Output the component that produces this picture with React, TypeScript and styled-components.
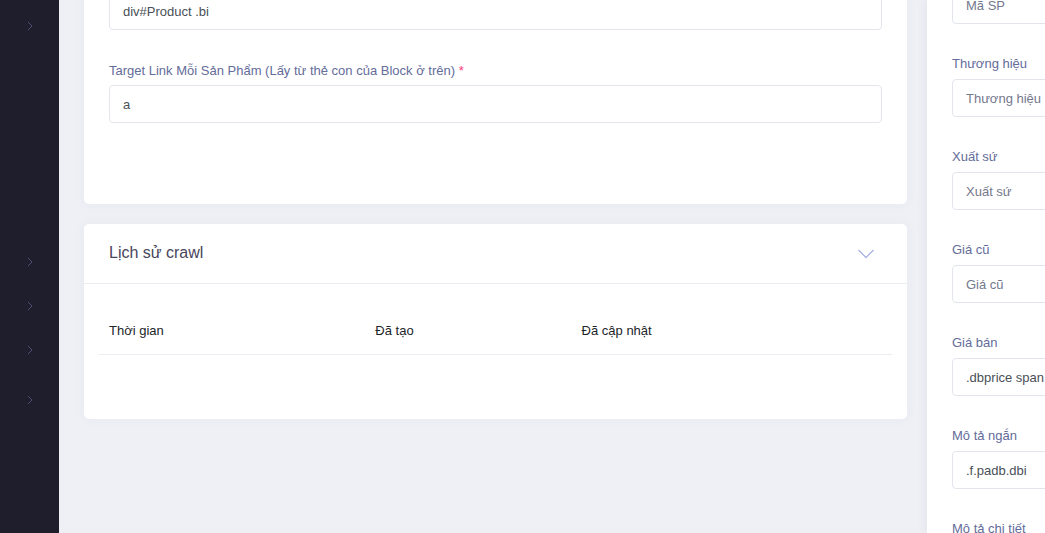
import React from "react";
import styled, { createGlobalStyle } from "styled-components";

const Global = createGlobalStyle`
  html, body { margin: 0; padding: 0; height: 100%; overflow: hidden; }
  body { font-family: "Liberation Sans", Arial, sans-serif; background: #eff0f6; }
  #root { height: 100%; }
`;

const Layout = styled.div`
  display: flex;
  height: 533px;
  width: 1045px;
  overflow: hidden;
`;

const Sidebar = styled.nav`
  flex: 0 0 59px;
  background: #1e1e2d;
  display: flex;
  flex-direction: column;
  padding-top: 4px;
`;

const SideItem = styled.div`
  height: 44px;
  display: flex;
  align-items: center;
  justify-content: center;
  color: #4b4d70;
`;

const SideSpacer = styled.div<{ $h: number }>`
  flex: 0 0 ${(p) => p.$h}px;
`;

const Main = styled.main`
  flex: 0 0 868px;
  padding: 0 20px 0 25px;
  box-sizing: border-box;
  overflow: hidden;
`;

const Scroll = styled.div<{ $offset: number }>`
  margin-top: ${(p) => -p.$offset}px;
  display: flex;
  flex-direction: column;
  gap: 20px;
`;

const Card = styled.section`
  background: #fff;
  border-radius: 5px;
  box-shadow: 0 0 13px 0 rgba(82, 63, 105, 0.04);
`;

const CardBody = styled.div<{ $pad: string }>`
  padding: ${(p) => p.$pad};
`;

const FormGroup = styled.div`
  margin-bottom: 31px;
`;

const Label = styled.label`
  display: block;
  font-size: 13px;
  line-height: 19px;
  color: #646c9a;
  margin-bottom: 5px;
`;

const Req = styled.span`
  color: #fd397a;
`;

const Input = styled.input`
  display: block;
  box-sizing: border-box;
  width: 100%;
  height: 38px;
  border: 1px solid #e2e5ec;
  border-radius: 4px;
  padding: 0 13px;
  font-family: "Liberation Sans", Arial, sans-serif;
  font-size: 13px;
  color: #495057;
  background: #fff;
  outline: none;
  &::placeholder {
    color: #74788d;
  }
`;

const CardHead = styled.header`
  height: 59px;
  border-bottom: 1px solid #ebedf3;
  display: flex;
  align-items: center;
  justify-content: space-between;
  padding: 0 33px 0 25px;
`;

const CardTitle = styled.h3`
  margin: 0 0 1px;
  font-size: 16px;
  font-weight: 400;
  color: #48465b;
`;

const Table = styled.table`
  width: 100%;
  border-collapse: collapse;
  table-layout: fixed;
`;

const Th = styled.th<{ $w: number }>`
  width: ${(p) => p.$w}px;
  text-align: left;
  font-weight: 400;
  font-size: 13px;
  line-height: 18px;
  color: #212529;
  padding: 14px 10px;
  border-bottom: 1px solid #ebedf3;
  box-sizing: border-box;
`;

const Aside = styled.aside`
  flex: 0 0 320px;
  background: #fff;
  box-shadow: -3px 0 8px rgba(82, 63, 105, 0.06);
  padding: 0 25px;
  box-sizing: border-box;
  overflow: hidden;
`;

const AsideInner = styled.div<{ $offset: number }>`
  margin-top: ${(p) => -p.$offset}px;
`;

const Field = styled.div`
  margin-bottom: 30px;
`;

const AsideLabel = styled.label`
  display: block;
  font-size: 13px;
  line-height: 20px;
  color: #646c9a;
  margin-bottom: 5px;
`;

const Chevron = ({ color, size = 8 }: { color: string; size?: number }) => (
  <svg width={size / 2 + 2} height={size + 2} viewBox="0 0 6 10" fill="none">
    <polyline points="1,1 5,5 1,9" stroke={color} strokeWidth="1" />
  </svg>
);

const Down = () => (
  <svg width="16" height="10" viewBox="0 0 16 10" fill="none">
    <polyline points="0.5,1 8,8.5 15.5,1" stroke="#a9b1e3" strokeWidth="1.3" />
  </svg>
);

const asideFields: { label: string; value?: string; placeholder?: string }[] = [
  { label: "Mã SP", placeholder: "Mã SP" },
  { label: "Thương hiệu", placeholder: "Thương hiệu" },
  { label: "Xuất sứ", placeholder: "Xuất sứ" },
  { label: "Giá cũ", placeholder: "Giá cũ" },
  { label: "Giá bán", value: ".dbprice span" },
  { label: "Mô tả ngắn", value: ".f.padb.dbi" },
  { label: "Mô tả chi tiết", placeholder: "Mô tả chi tiết" },
];

export default function App() {
  return (
    <>
      <Global />
      <Layout>
        <Sidebar>
          <SideItem><Chevron color="#4b4d70" /></SideItem>
          <SideSpacer $h={192} />
          <SideItem><Chevron color="#4b4d70" /></SideItem>
          <SideItem><Chevron color="#4b4d70" /></SideItem>
          <SideItem><Chevron color="#4b4d70" /></SideItem>
          <SideSpacer $h={6} />
          <SideItem><Chevron color="#4b4d70" /></SideItem>
        </Sidebar>
        <Main>
          <Scroll $offset={57}>
            <Card>
              <CardBody $pad="25px 25px 50px">
                <FormGroup>
                  <Label>Target Block Sản Phẩm <Req>*</Req></Label>
                  <Input defaultValue="div#Product .bi" />
                </FormGroup>
                <FormGroup>
                  <Label>
                    Target Link Mỗi Sản Phẩm (Lấy từ thẻ con của Block ở trên) <Req>*</Req>
                  </Label>
                  <Input defaultValue="a" />
                </FormGroup>
              </CardBody>
            </Card>
            <Card>
              <CardHead>
                <CardTitle>Lịch sử crawl</CardTitle>
                <Down />
              </CardHead>
              <CardBody $pad="24px 15px 64px">
                <Table>
                  <thead>
                    <tr>
                      <Th $w={266}>Thời gian</Th>
                      <Th $w={206}>Đã tạo</Th>
                      <Th $w={320}>Đã cập nhật</Th>
                    </tr>
                  </thead>
                  <tbody />
                </Table>
              </CardBody>
            </Card>
          </Scroll>
        </Main>
        <Aside>
          <AsideInner $offset={39}>
            {asideFields.map((f) => (
              <Field key={f.label}>
                <AsideLabel>{f.label}</AsideLabel>
                <Input defaultValue={f.value} placeholder={f.placeholder} />
              </Field>
            ))}
          </AsideInner>
        </Aside>
      </Layout>
    </>
  );
}
